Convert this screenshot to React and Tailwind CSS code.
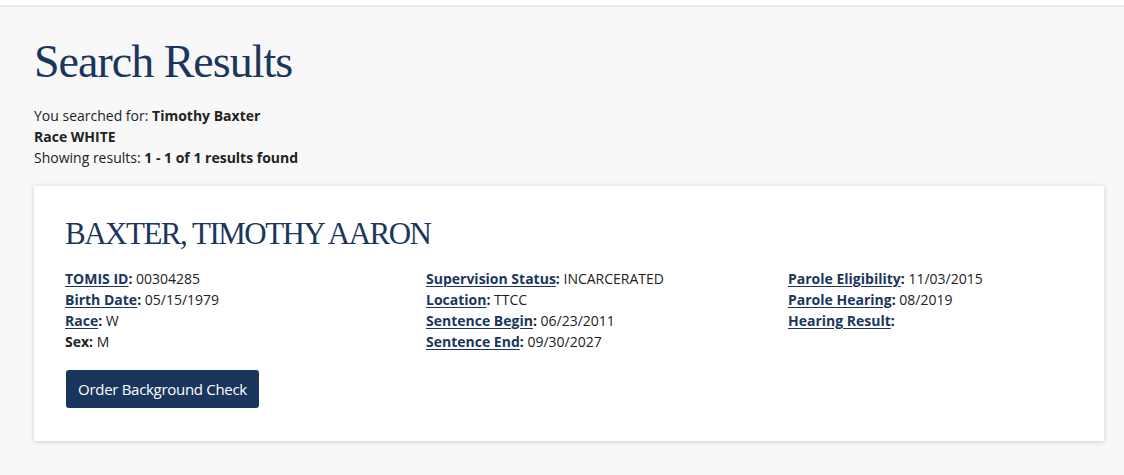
import React from "react";

const rows = [
  [
    { label: "TOMIS ID", value: "00304285", link: true },
    { label: "Birth Date", value: "05/15/1979", link: true },
    { label: "Race", value: "W", link: true },
    { label: "Sex", value: "M", link: false },
  ],
  [
    { label: "Supervision Status", value: "INCARCERATED", link: true },
    { label: "Location", value: "TTCC", link: true },
    { label: "Sentence Begin", value: "06/23/2011", link: true },
    { label: "Sentence End", value: "09/30/2027", link: true },
  ],
  [
    { label: "Parole Eligibility", value: "11/03/2015", link: true },
    { label: "Parole Hearing", value: "08/2019", link: true },
    { label: "Hearing Result", value: "", link: true },
  ],
];

const Field = ({ label, value, link }) => (
  <div className="h-[21px]">
    {link ? (
      <a href="#" className="font-bold text-[#1b365d] underline underline-offset-2">
        {label}
      </a>
    ) : (
      <span className="font-bold text-[#222]">{label}</span>
    )}
    <span className="font-bold text-[#222]">:</span>
    {value && <span> {value}</span>}
  </div>
);

const App = () => {
  return (
    <div
      className="min-h-[475px] bg-[#f8f8f8] text-[#222] text-[14px] leading-[21px]"
      style={{ fontFamily: '"Open Sans", "Liberation Sans", sans-serif' }}
    >
      <div className="h-[5px] bg-white" />
      <div className="h-[2px] bg-[#ececec]" />

      <div className="px-[34px] pt-[26px] pb-[35px]">
        <h1
          className="mt-[3px] text-[46px] leading-[51px] text-[#1b365d] tracking-[-1px] mb-[18px]"
          style={{ fontFamily: '"Liberation Serif", "DejaVu Serif", serif' }}
        >
          Search Results
        </h1>

        <div>
          You searched for: <b>Timothy Baxter</b>
        </div>
        <div>
          <b>Race WHITE</b>
        </div>
        <div>
          Showing results: <b>1 - 1 of 1 results found</b>
        </div>

        <div className="mt-[18px] w-[1070px] bg-white shadow-[0_1px_5px_rgba(0,0,0,0.18)] pl-[31px] pr-[31px] pt-[31px] pb-[33px]">
          <h2
            className="text-[31px] leading-[34px] text-[#1b365d] tracking-[-1.5px] mb-[17px]"
            style={{ fontFamily: '"Liberation Serif", "DejaVu Serif", serif' }}
          >
            BAXTER, TIMOTHY AARON
          </h2>

          <div className="grid grid-cols-[361px_362px_1fr]">
            {rows.map((col, i) => (
              <div key={i}>
                {col.map((f) => (
                  <Field key={f.label} {...f} />
                ))}
              </div>
            ))}
          </div>

          <button className="mt-[18px] ml-px h-[38px] w-[193px] rounded-[3px] bg-[#1b365d] text-white text-[15px] tracking-[-0.3px]">
            Order Background Check
          </button>
        </div>
      </div>
    </div>
  );
};

export default App;
